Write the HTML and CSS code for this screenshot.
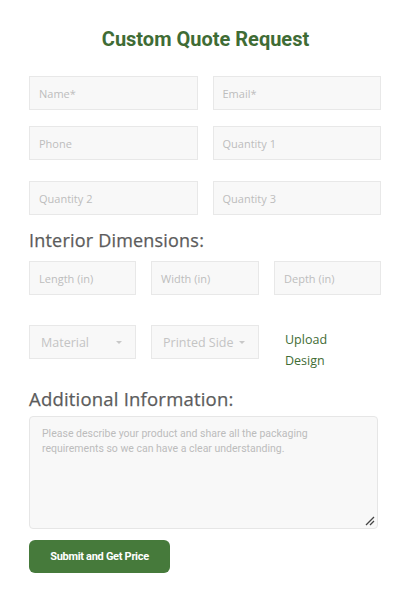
FILE: index.html
```html
<!DOCTYPE html>
<html>
<head>
<meta charset="utf-8">
<link rel="stylesheet" href="styles.css">
</head>
<body>
<div class="page">
  <h1 class="title">Custom Quote Request</h1>
  <form class="form">
    <div class="row two r1">
      <div class="field"><span class="ph">Name*</span></div>
      <div class="field"><span class="ph">Email*</span></div>
    </div>
    <div class="row two r2">
      <div class="field"><span class="ph">Phone</span></div>
      <div class="field"><span class="ph">Quantity 1</span></div>
    </div>
    <div class="row two r3">
      <div class="field"><span class="ph">Quantity 2</span></div>
      <div class="field"><span class="ph">Quantity 3</span></div>
    </div>
    <h2 class="section h-dim">Interior Dimensions:</h2>
    <div class="row three r4">
      <div class="field"><span class="ph">Length (in)</span></div>
      <div class="field"><span class="ph">Width (in)</span></div>
      <div class="field"><span class="ph">Depth (in)</span></div>
    </div>
    <div class="row three r5">
      <div class="field select"><span class="sel">Material</span><span class="caret"></span></div>
      <div class="field select"><span class="sel">Printed Side</span><span class="caret"></span></div>
      <div class="upload">Upload<br>Design</div>
    </div>
    <h2 class="section h-add">Additional Information:</h2>
    <div class="textarea">
      <span class="tph">Please describe your product and share all the packaging requirements so we can have a clear understanding.</span>
      <svg class="grip" width="10" height="10" viewBox="0 0 10 10"><path d="M9 1 L1 9 M9 5 L5 9" stroke="#444" stroke-width="1.3" fill="none"/></svg>
    </div>
    <div class="actions"><button type="button" class="submit">Submit and Get Price</button></div>
  </form>
</div>
</body>
</html>
```
FILE: styles.css
```css
html, body { margin: 0; padding: 0; background: #fff; }
.page { width: 413px; padding: 0 32px 0 29px; box-sizing: border-box; }
.title {
  margin: 0; padding-top: 27px; height: 49px; box-sizing: border-box;
  text-align: center; font-family: Roboto, "Liberation Sans", sans-serif;
  font-weight: 700; font-size: 20px; line-height: 24px; color: #3f6c35;
  padding-left: 1px;
}
.form { display: flex; flex-direction: column; }
.row { display: grid; column-gap: 15px; }
.two { grid-template-columns: 1fr 1fr; }
.three { grid-template-columns: 107px 108px 107px; }
.r1 { margin-top: 27px; }
.r2 { margin-top: 16px; }
.r3 { margin-top: 21px; }
.r4 { margin-top: 9px; }
.r5 { margin-top: 30px; }
.field {
  height: 34px; box-sizing: border-box; border: 1px solid #e8e8e8;
  background: #f8f8f8; display: flex; align-items: center; padding-left: 9px;
  font-family: "Open Sans", sans-serif; font-size: 11px; color: #bdbdbd;
}
.select { padding-left: 11px; padding-right: 13px; justify-content: space-between; font-size: 12.5px; color: #c4c4c4; }
.caret { width: 0; height: 0; border-left: 3px solid transparent; border-right: 3px solid transparent; border-top: 3px solid #c8c8c8; margin-top: 1px; }
.upload {
  font-family: "Open Sans", sans-serif; font-size: 12.5px; line-height: 21px;
  color: #3f6c35; padding-left: 11px; padding-top: 4px;
}
.section {
  margin: 0; font-family: "Open Sans", sans-serif; font-weight: 400;
  color: #5c5c5c; font-size: 18px; line-height: 24px; letter-spacing: 0.2px;
  -webkit-text-stroke: 0.25px #5c5c5c;
}
.h-dim { margin-top: 13px; }
.h-add { margin-top: 16px; font-size: 18.5px; }
.textarea {
  position: relative; margin-top: 5px; width: 349px; height: 113px; box-sizing: border-box;
  border: 1px solid #e6e6e6; border-radius: 4px; background: #f8f8f8;
  padding: 9px 50px 0 12px;
  font-family: Roboto, sans-serif; font-size: 10.5px; line-height: 15px; color: #bcbcbc;
}
.grip { position: absolute; right: 2px; bottom: 2px; }
.actions { margin-top: 11px; }
.submit {
  width: 141px; height: 33px; border: none; border-radius: 6px; background: #467a3b;
  color: #fff; font-family: Roboto, "Liberation Sans", sans-serif; font-weight: 700;
  font-size: 11px; letter-spacing: -0.3px; padding: 0;
}
```
